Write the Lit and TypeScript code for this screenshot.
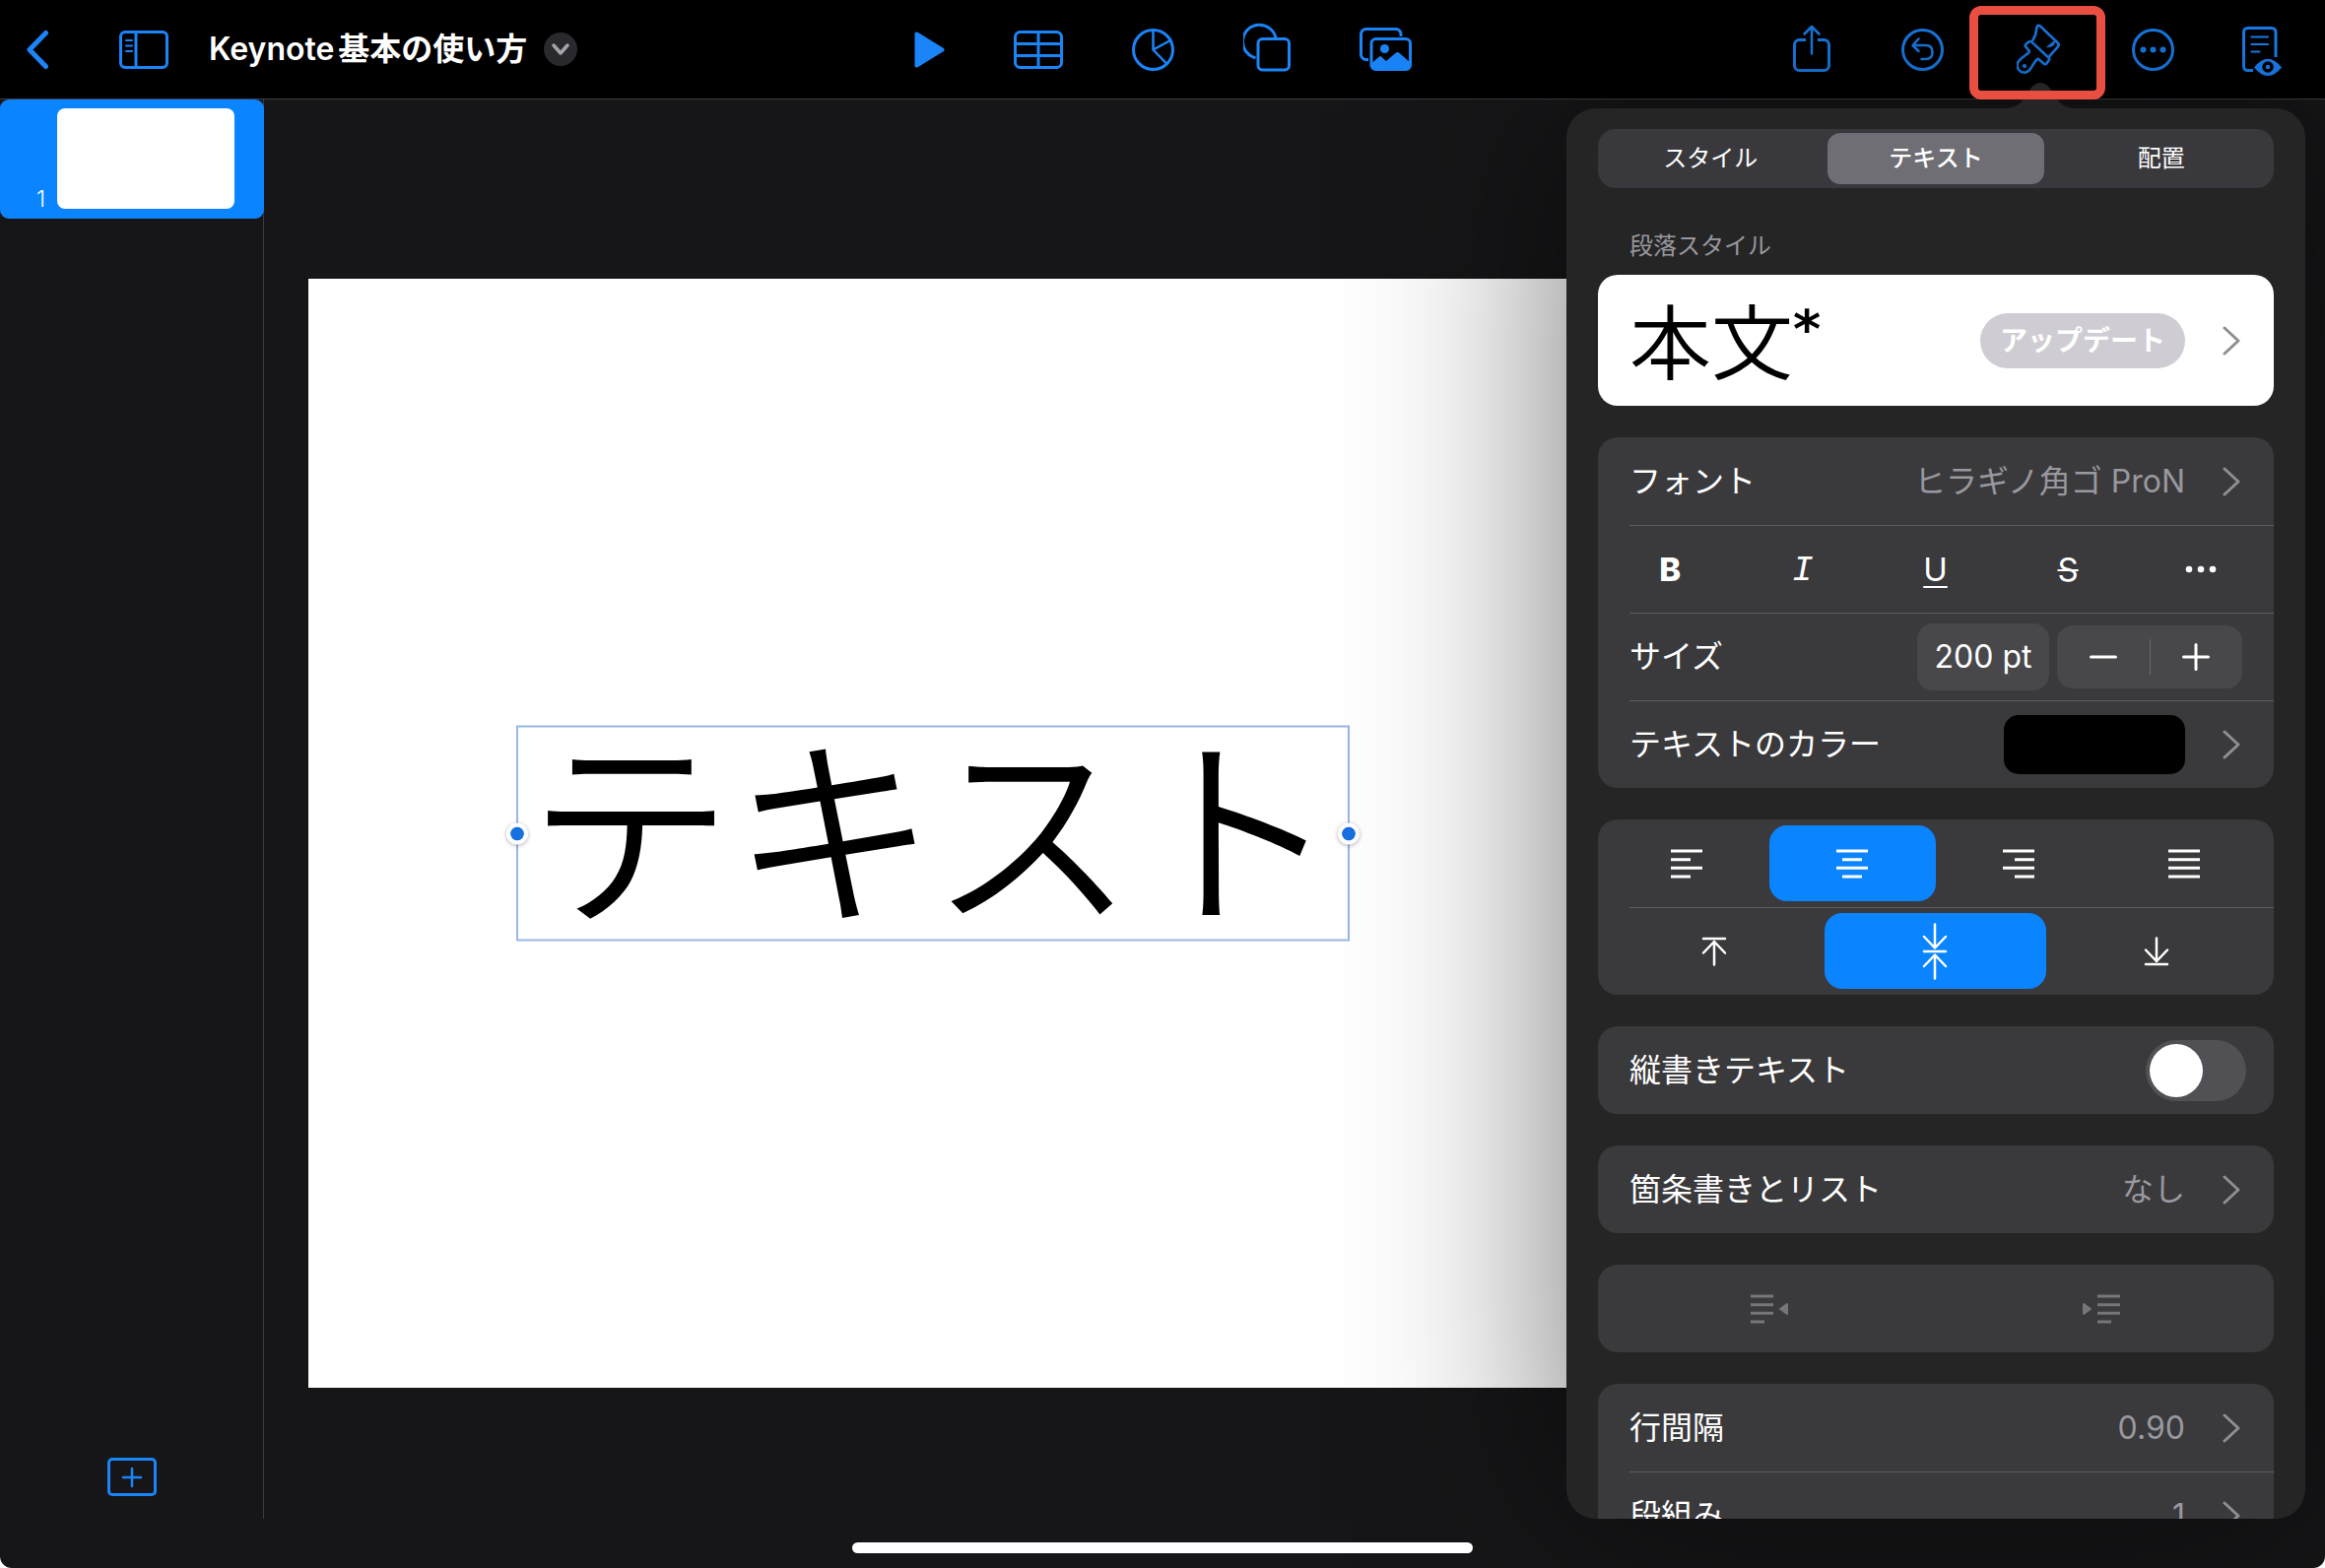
import { LitElement, html, svg, css } from "lit";
import { customElement, state } from "lit/decorators.js";
import { classMap } from "lit/directives/class-map.js";

const icon = (width: number, height: number, body: unknown, viewBox?: string) => html`
  <svg class="icon" width=${width} height=${height} viewBox=${viewBox ?? `0 0 ${width} ${height}`}
    fill="none" stroke="currentColor" stroke-width="3" stroke-linecap="round" stroke-linejoin="round"
    aria-hidden="true">${body}</svg>`;

const icons = {
  back: () => icon(22, 60, svg`<path d="M19.5 13.500L3 30.500l16.500 17" stroke-width="5"/>`),
  sidebar: () => icon(50, 60, svg`
    <rect x="1.500" y="12.500" width="47" height="36" rx="4.500"/>
    <path d="M17 12.500v36"/><path d="M7 21h6M7 26.500h6M7 32h6" stroke-width="2"/>`),
  caret: () => icon(18, 12, svg`<path d="M2 2l7 8 7-8" stroke-width="3.500"/>`),
  play: () => icon(31, 60, svg`
    <path d="M1.500 14.500v32q0 1.500 1.500.8L29 31.500q1.200-1 0-2L3 13.700q-1.500-.7-1.500.8z" fill="currentColor" stroke-width="2"/>`),
  table: () => icon(50, 60, svg`
    <rect x="1.500" y="12.500" width="47" height="36" rx="5"/><path d="M25 12.500v36M1.500 24.500h47M1.500 36.500h47"/>`),
  chart: () => icon(43, 60, svg`
    <circle cx="21.500" cy="30.500" r="20"/><path d="M21.500 11v19.500L39 21M21.500 30.500L35 44.500" stroke-width="2.500"/>`),
  shapes: () => icon(48, 60, svg`
    <path d="M12.500 38.800A17 17 0 1 1 33 18.500" stroke-linecap="butt"/>
    <rect x="15" y="19.500" width="31.500" height="31.500" rx="4.500"/>`),
  photos: () => icon(53, 60, svg`
    <path d="M9 40.500H6.500a5 5 0 0 1-5-5V14.500a5 5 0 0 1 5-5H37a5 5 0 0 1 5 5V17" stroke-linecap="butt"/>
    <rect x="12" y="19.500" width="39.500" height="31" rx="4.500"/>
    <circle cx="25.500" cy="29.500" r="4.500" fill="currentColor" stroke="none"/>
    <path d="M13 43.500l7-6q1-1 2 0l5 4.500 10-8.500q1.500-1 3 0L51 43v4q0 3-3 3H16q-3 0-3-3z" fill="currentColor" stroke="none"/>`),
  share: () => icon(38, 60, svg`
    <path d="M13 20.500H6.500a5 5 0 0 0-5 5v21a5 5 0 0 0 5 5h25a5 5 0 0 0 5-5v-21a5 5 0 0 0-5-5H25" stroke-linecap="butt"/>
    <path d="M19 34.500V7.500M11.500 14.500l7.500-7.500 7.500 7.500" stroke-width="2.500"/>`),
  undo: () => icon(43, 60, svg`
    <circle cx="21.500" cy="30.500" r="20"/>
    <path d="M20.500 40h4q7 0 7-7t-7-7H12M17.500 19.500L11.500 26l6 6" stroke-width="2.500"/>`),
  brush: () => icon(44, 60, svg`
    <g stroke-width="8">
      <path d="M224 122q10-16 11-34 1-14 11-9l54 52q6 6 0 12l-26 30"/>
      <path d="M213 127q-4 1-11 9-3 4 0 7l10 12q2 4-2 7-12 9-24 19c-22 20-4 42 14 41 18-2 18-20 36-40l4-2 18 15q5 3 9-2l6-9q3-4-1-8l-51-47q-4-4-8-2z"/>
    </g>
    <path d="M294 121l-28 23q14 0 21-5z" fill="currentColor" stroke-width="2"/>
    <circle cx="198" cy="202" r="6.500" fill="currentColor" stroke="none"/>`, "174 60 133 181"),
  more: () => icon(43, 60, svg`
    <circle cx="21.500" cy="30.500" r="20"/>
    <g fill="currentColor" stroke="none"><circle cx="11.500" cy="30.500" r="3"/><circle cx="21.500" cy="30.500" r="3"/><circle cx="31.500" cy="30.500" r="3"/></g>`),
  presenter: () => icon(40, 60, svg`
    <path d="M11 51.500H5.500a4 4 0 0 1-4-4v-35a4 4 0 0 1 4-4H30a4 4 0 0 1 4 4V38" stroke-linecap="butt"/>
    <path d="M9.500 17.500H26M9.500 25H26M9.500 32.500h8" stroke-width="2.200"/>
    <path d="M12 48.500q14-17.500 28 0-14 17-28 0z" fill="currentColor" stroke="none"/>
    <circle cx="26" cy="48" r="4" stroke="#000" stroke-width="3.500"/>`),
  addSlide: () => icon(50, 40, svg`
    <rect x="1.500" y="1.500" width="47" height="36" rx="3.500"/><path d="M25 11v18M16 20h18" stroke-width="2.500"/>`),
  chevron: () => icon(18, 30, svg`<path d="M2 2l14 13L2 28"/>`),
  minus: () => icon(28, 28, svg`<path d="M1.500 14h25"/>`),
  plus: () => icon(28, 28, svg`<path d="M1.500 14h25M14 1.500v25"/>`),
  dots: () => icon(32, 8, svg`
    <g fill="currentColor" stroke="none"><circle cx="4" cy="4" r="3.300"/><circle cx="16" cy="4" r="3.300"/><circle cx="28" cy="4" r="3.300"/></g>`),
  alignLeft: () => icon(34, 30, svg`<path d="M1 2h32M1 10.700h20M1 19.300h32M1 28h20" stroke-linecap="butt"/>`),
  alignCenter: () => icon(34, 30, svg`<path d="M1 2h32M7 10.700h20M1 19.300h32M7 28h20" stroke-linecap="butt"/>`),
  alignRight: () => icon(34, 30, svg`<path d="M1 2h32M13 10.700h20M1 19.300h32M13 28h20" stroke-linecap="butt"/>`),
  justify: () => icon(34, 30, svg`<path d="M1 2h32M1 10.700h32M1 19.300h32M1 28h32" stroke-linecap="butt"/>`),
  top: () => icon(26, 30, svg`<path d="M2 2h22M13 28.500V5M2 16.500L13 5l11 11.500" stroke-width="2.500"/>`),
  middle: () => icon(26, 58, svg`<path d="M2 29h22M13 1.500V25M2 14l11 11.500L24 14M13 56.500V33M2 44l11-11.500L24 44" stroke-width="2.500"/>`),
  bottom: () => icon(26, 30, svg`<path d="M2 28h22M13 1.500V25M2 13.500L13 25l11-11.500" stroke-width="2.500"/>`),
  outdent: () => icon(40, 30, svg`
    <path d="M1 2h23M1 10.700h23M1 19.300h23M1 28h14" stroke-linecap="butt"/>
    <path d="M38 10v10l-7-5z" fill="currentColor" stroke-width="2"/>`),
  indent: () => icon(40, 30, svg`
    <path d="M16 2h23M16 10.700h23M16 19.300h23M16 28h14" stroke-linecap="butt"/>
    <path d="M2 10v10l7-5z" fill="currentColor" stroke-width="2"/>`),
};

type IconName = keyof typeof icons;
interface Tool { name: IconName; label: string }

const insertTools: Tool[] = [
  { name: "play", label: "再生" },
  { name: "table", label: "表" },
  { name: "chart", label: "グラフ" },
  { name: "shapes", label: "図形" },
  { name: "photos", label: "メディア" },
];

const documentTools: Tool[] = [
  { name: "share", label: "共有" },
  { name: "undo", label: "取り消す" },
  { name: "brush", label: "フォーマット" },
  { name: "more", label: "その他" },
  { name: "presenter", label: "プレゼンタノート" },
];

const horizontal: Tool[] = [
  { name: "alignLeft", label: "左揃え" },
  { name: "alignCenter", label: "中央揃え" },
  { name: "alignRight", label: "右揃え" },
  { name: "justify", label: "両端揃え" },
];

const vertical: Tool[] = [
  { name: "top", label: "上揃え" },
  { name: "middle", label: "上下中央" },
  { name: "bottom", label: "下揃え" },
];

const base = css`
  *, *::before, *::after { box-sizing: border-box; }
  button {
    appearance: none; border: 0; padding: 0; margin: 0; background: none;
    color: inherit; font: inherit; text-align: inherit; cursor: pointer;
  }
  .icon { display: block; flex: none; }
`;

@customElement("tool-bar")
class ToolBar extends LitElement {
  static styles = [base, css`
    :host {
      display: grid; grid-template-columns: 1fr auto 1fr; align-items: center;
      height: 101px; background: #000; border-bottom: 1px solid #3d3d40; color: #1a84f8;
    }
    .group { display: flex; align-items: center; }
    .left { padding-left: 27px; }
    .sidebar { margin: 0 41px 0 72px; }
    .title { display: flex; align-items: center; gap: 17px; color: #fff; font-size: 32px; font-weight: 600; line-height: 48px; white-space: nowrap; }
    h1 { margin: 0; font: inherit; }
    .latin { margin-right: 4px; }
    .badge { display: grid; place-items: center; width: 34px; height: 34px; border-radius: 50%; background: #2a2a2e; color: #a3a3a9; }
    .insert { gap: 70px; }
    .document { gap: 72px; justify-content: flex-end; padding-right: 44px; }
    .brush { position: relative; margin-left: 2px; margin-right: 1px; }
    .more { margin-right: -3px; }
    .brush::after {
      content: ""; position: absolute; z-index: 5; inset: -14px -46px -21px -48px;
      border: 9px solid #e94f41; border-radius: 12px;
    }
  `];

  private tool = (t: Tool) => html`<button class=${t.name} aria-label=${t.label}>${icons[t.name]()}</button>`;

  render() {
    return html`
      <div class="group left">
        <button aria-label="戻る">${icons.back()}</button>
        <button class="sidebar" aria-label="表示オプション">${icons.sidebar()}</button>
        <button class="title">
          <h1><span class="latin">Keynote</span>基本の使い方</h1>
          <span class="badge">${icons.caret()}</span>
        </button>
      </div>
      <nav class="group insert">${insertTools.map(this.tool)}</nav>
      <div class="group document">${documentTools.map(this.tool)}</div>`;
  }
}

@customElement("slide-list")
class SlideList extends LitElement {
  static styles = [base, css`
    :host {
      display: flex; flex-direction: column; justify-content: space-between;
      width: 268px; border-right: 1px solid #3d3d40;
    }
    .slide {
      display: flex; align-items: flex-end; gap: 12px; width: 268px; height: 121px;
      padding: 9px 30px 10px 0; border-radius: 9px; background: #0a84ff;
    }
    .number { flex: 1; text-align: right; color: #fff; font-size: 23px; font-weight: 300; line-height: 20px; }
    .thumb { width: 180px; height: 102px; border-radius: 8px; background: #fff; }
    .add { align-self: center; margin-bottom: 22px; color: #1a84f8; }
  `];

  render() {
    return html`
      <button class="slide" aria-current="true"><span class="number">1</span><span class="thumb"></span></button>
      <button class="add" aria-label="スライドを追加">${icons.addSlide()}</button>`;
  }
}

@customElement("format-panel")
class FormatPanel extends LitElement {
  @state() private tab = 1;
  @state() private halign: IconName = "alignCenter";
  @state() private valign: IconName = "middle";

  static styles = [base, css`
    :host { display: block; color: #fff; font-size: 32px; line-height: 44px; }
    :host::before {
      content: ""; position: absolute; z-index: -1; inset: 0;
      background: rgba(0, 0, 0, .54); filter: blur(108px);
    }
    .body {
      height: 100%; overflow: hidden; padding: 21px 32px 0; border-radius: 30px; background: #252525;
      display: flex; flex-direction: column; gap: 32px;
    }
    .body > * { flex: none; }
    .arrow { position: absolute; left: 447px; bottom: 100%; display: block; fill: #252525; }
    .tabs { display: flex; height: 60px; border-radius: 18px; background: #39393d; font-size: 24px; line-height: 36px; }
    .tab { flex: 1; margin: 4px; border-radius: 13px; text-align: center; }
    .tab.on { background: #6e6e74; font-weight: 500; }
    .style { display: flex; flex-direction: column; gap: 10px; padding-top: 8px; }
    h2 { margin: 0; padding-left: 32px; color: #98989f; font-size: 24px; font-weight: 400; line-height: 38px; }
    .preview {
      display: flex; align-items: center; height: 133px; padding: 0 34px 6px 32px;
      border-radius: 20px; background: #fff; color: #000;
    }
    .preview button { margin-top: 6px; }
    .sample { flex: 1; display: flex; align-items: flex-start; font-family: "Noto Sans CJK JP", sans-serif; font-size: 83px; font-weight: 350; line-height: 120px; }
    .star { font-family: "DejaVu Sans", sans-serif; font-size: 54px; font-weight: 700; line-height: 104px; }
    .update { height: 56px; margin-right: 38px; padding: 0 20px; border-radius: 28px; background: #cfcdd3; color: #fff; font-size: 28px; font-weight: 600; }
    .chev { color: #8e8e93; }
    .card { display: flex; flex-direction: column; border-radius: 20px; background: #3a3a3c; }
    .row { display: flex; align-items: center; height: 89px; padding: 0 34px 0 32px; }
    .row + .row { background: linear-gradient(#5e5e61, #5e5e61) no-repeat 32px 0 / 100% 1px; }
    .name { flex: 1; }
    .value { margin-right: 38px; color: #98989f; }
    .even { padding: 0 7px 0 6px; }
    .even > button { display: grid; place-items: center; flex: 1; height: 77px; border-radius: 18px; }
    .even > .on { background: #0a84ff; }
    .b { font-weight: 800; font-size: 33px; }
    .i { font-family: "Liberation Mono", monospace; font-style: italic; font-size: 36px; line-height: 50px; padding-top: 4px; }
    .u { text-decoration: underline; text-decoration-thickness: 2px; text-underline-offset: 5px; font-size: 33px; }
    .s { text-decoration: line-through; text-decoration-thickness: 2px; font-size: 33px; }
    .measure { padding-right: 32px; }
    .size {
      width: 134px; height: 68px; padding: 0; border: 0; border-radius: 16px; background: #48484b;
      color: #fff; font: inherit; text-align: center;
    }
    .stepper { display: flex; align-items: center; height: 64px; width: 188px; margin-left: 8px; border-radius: 16px; background: #48484b; }
    .stepper button { display: grid; place-items: center; flex: 1; height: 36px; }
    .stepper button + button { border-left: 1px solid #68686c; }
    .swatch { width: 184px; height: 60px; margin-right: 38px; border-radius: 15px; background: #000; }
    .switch {
      appearance: none; display: flex; align-items: center; width: 102px; height: 62px; margin: 0;
      padding: 4px; border-radius: 31px; background: #505055;
    }
    .switch::before { content: ""; width: 54px; height: 54px; border-radius: 50%; background: #fff; }
    .switch:checked { background: #30d158; justify-content: flex-end; }
    .toggle { padding-right: 28px; }
    .off { color: #76767a; }
  `];

  private link = (name: string, value: unknown) => html`
    <button class="row"><span class="name">${name}</span>${value}<span class="chev">${icons.chevron()}</span></button>`;

  render() {
    return html`
      <svg class="arrow" width="68" height="26" viewBox="0 0 68 26" aria-hidden="true">
        <path d="M0 26C12 25 16 19 22 9 26 2 30 0 34 0s8 2 12 9c6 10 10 16 22 17z"/>
      </svg>
      <div class="body">
        <div class="tabs" role="tablist">
          ${["スタイル", "テキスト", "配置"].map((t, n) => html`
            <button role="tab" aria-selected=${n === this.tab} class=${classMap({ tab: true, on: n === this.tab })}
              @click=${() => (this.tab = n)}>${t}</button>`)}
        </div>
        <section class="style">
          <h2>段落スタイル</h2>
          <div class="preview">
            <span class="sample">本文<span class="star">*</span></span>
            <button class="update">アップデート</button>
            <button class="chev" aria-label="段落スタイル">${icons.chevron()}</button>
          </div>
        </section>
        <section class="card">
          ${this.link("フォント", html`<span class="value">ヒラギノ角ゴ ProN</span>`)}
          <div class="row even">
            <button class="b" aria-label="ボールド">B</button>
            <button class="i" aria-label="イタリック">I</button>
            <button class="u" aria-label="アンダーライン">U</button>
            <button class="s" aria-label="取り消し線">S</button>
            <button aria-label="その他のオプション">${icons.dots()}</button>
          </div>
          <div class="row measure">
            <label class="name" for="size">サイズ</label>
            <input class="size" id="size" value="200 pt">
            <div class="stepper">
              <button aria-label="小さく">${icons.minus()}</button>
              <button aria-label="大きく">${icons.plus()}</button>
            </div>
          </div>
          ${this.link("テキストのカラー", html`<span class="swatch"></span>`)}
        </section>
        <section class="card">
          <div class="row even">
            ${horizontal.map(t => html`<button aria-label=${t.label} class=${classMap({ on: t.name === this.halign })}
              @click=${() => (this.halign = t.name)}>${icons[t.name]()}</button>`)}
          </div>
          <div class="row even">
            ${vertical.map(t => html`<button aria-label=${t.label} class=${classMap({ on: t.name === this.valign })}
              @click=${() => (this.valign = t.name)}>${icons[t.name]()}</button>`)}
          </div>
        </section>
        <section class="card">
          <div class="row toggle">
            <label class="name" for="vertical">縦書きテキスト</label>
            <input class="switch" id="vertical" type="checkbox" role="switch">
          </div>
        </section>
        <section class="card">${this.link("箇条書きとリスト", html`<span class="value">なし</span>`)}</section>
        <section class="card">
          <div class="row even off">
            <button disabled aria-label="インデントを減らす">${icons.outdent()}</button>
            <button disabled aria-label="インデントを増やす">${icons.indent()}</button>
          </div>
        </section>
        <section class="card">
          ${this.link("行間隔", html`<span class="value">0.90</span>`)}
          ${this.link("段組み", html`<span class="value">1</span>`)}
        </section>
      </div>`;
  }
}

@customElement("app-root")
class AppRoot extends LitElement {
  static styles = [base, css`
    :host { display: block; background: #fff; font-family: Inter, "Noto Sans CJK JP", sans-serif; }
    .shell {
      position: relative; display: grid; grid-template-rows: auto minmax(0, 1fr) 50px;
      height: 100vh; overflow: hidden; border-radius: 0 0 12px 12px; background: #161618;
    }
    .work { display: flex; min-height: 0; }
    slide-list { flex: none; }
    .canvas { flex: 1; min-width: 0; display: flex; overflow: hidden; padding: 182px 0 133px 45px; }
    .page { position: relative; flex: none; height: 100%; aspect-ratio: 4 / 3; background: #fff; }
    .textbox {
      position: absolute; left: 211px; top: 50%; transform: translateY(-50%);
      display: flex; align-items: flex-start; justify-content: center; width: 846px; height: 219px;
      border: 2px solid #9ab6e6; color: #000; font-family: "Noto Sans CJK JP", sans-serif;
      font-size: 207px; font-weight: 350; line-height: 188px; white-space: nowrap;
    }
    .textbox::before, .textbox::after {
      content: ""; position: absolute; top: 50%; width: 22px; height: 22px; margin: -11px;
      border: 4px solid #fff; border-radius: 50%; background: #1670e0; background-clip: padding-box;
      box-shadow: 0 1px 4px rgba(0, 0, 0, .3);
    }
    .textbox::before { left: -1px; }
    .textbox::after { right: -1px; }
    format-panel { position: absolute; z-index: 1; top: 110px; right: 20px; bottom: 50px; width: 750px; }
    .home { position: relative; z-index: 2; display: flex; justify-content: center; padding-top: 24px; }
    .bar { width: 630px; height: 11px; border-radius: 6px; background: #fff; }
  `];

  render() {
    return html`
      <div class="shell">
        <tool-bar></tool-bar>
        <div class="work">
          <slide-list></slide-list>
          <main class="canvas">
            <div class="page"><div class="textbox">テキスト</div></div>
          </main>
        </div>
        <format-panel></format-panel>
        <footer class="home"><div class="bar"></div></footer>
      </div>`;
  }
}
